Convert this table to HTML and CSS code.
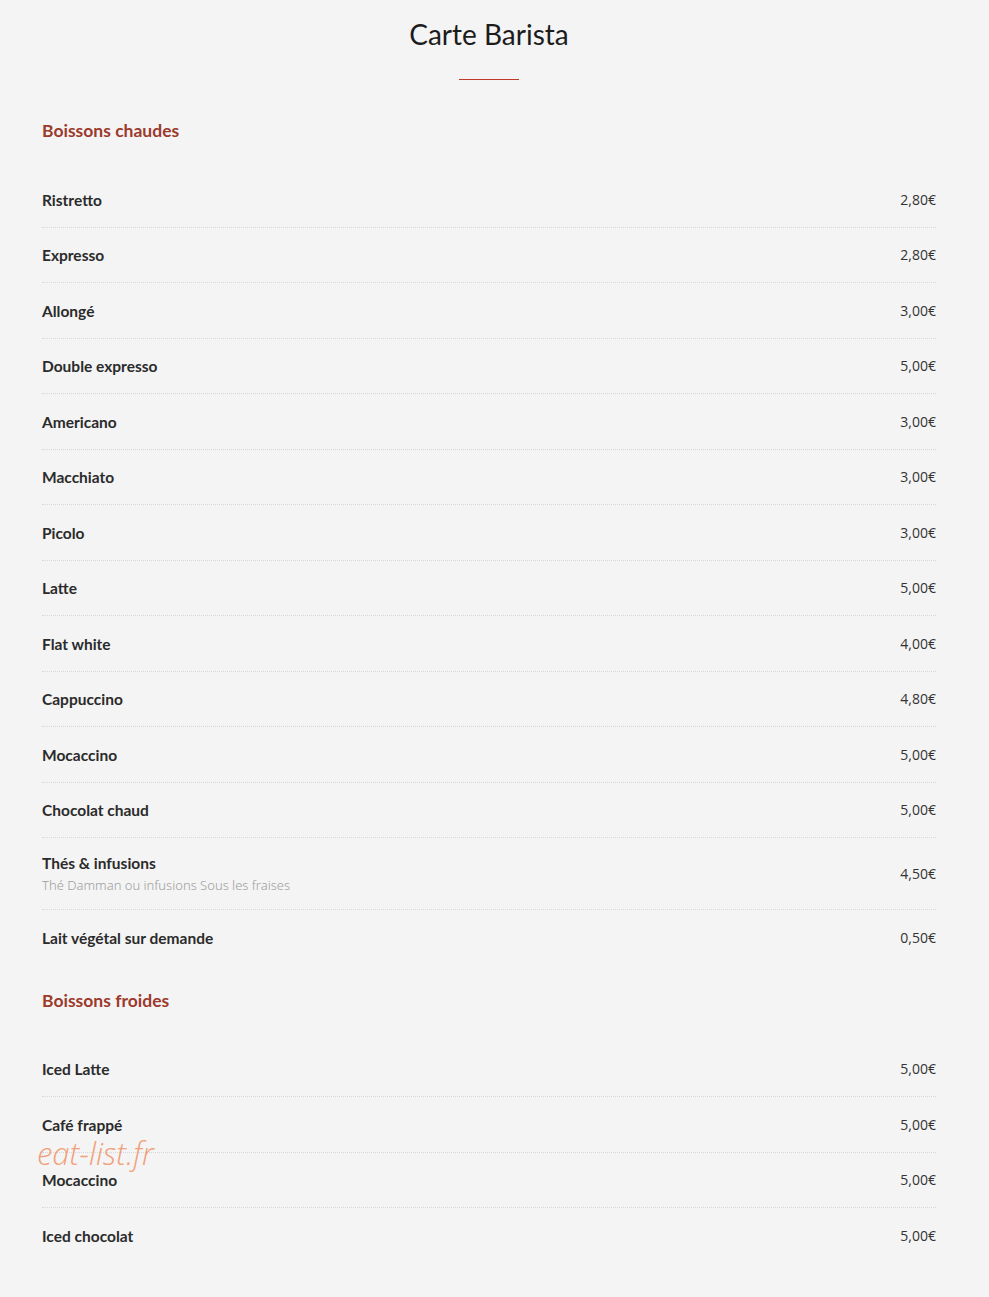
FILE: index.html
```html
<!DOCTYPE html>
<html lang="fr">
<head>
  <meta charset="UTF-8">
  <title>Carte Barista</title>
  <meta name="viewport" content="width=device-width, initial-scale=1.0">
  <link rel="stylesheet" href="styles.css">
</head>
<body>

  <div class="menu">
    <h1 class="menu-title">Carte Barista</h1>
    <div class="title-rule"></div>

    <!-- Boissons chaudes -->
    <section class="menu-section">
      <h2 class="section-title">Boissons chaudes</h2>
      <ul class="items">
        <li class="item"><div class="item-name">Ristretto</div><div class="item-price">2,80€</div></li>
        <li class="item"><div class="item-name">Expresso</div><div class="item-price">2,80€</div></li>
        <li class="item"><div class="item-name">Allongé</div><div class="item-price">3,00€</div></li>
        <li class="item"><div class="item-name">Double expresso</div><div class="item-price">5,00€</div></li>
        <li class="item"><div class="item-name">Americano</div><div class="item-price">3,00€</div></li>
        <li class="item"><div class="item-name">Macchiato</div><div class="item-price">3,00€</div></li>
        <li class="item"><div class="item-name">Picolo</div><div class="item-price">3,00€</div></li>
        <li class="item"><div class="item-name">Latte</div><div class="item-price">5,00€</div></li>
        <li class="item"><div class="item-name">Flat white</div><div class="item-price">4,00€</div></li>
        <li class="item"><div class="item-name">Cappuccino</div><div class="item-price">4,80€</div></li>
        <li class="item"><div class="item-name">Mocaccino</div><div class="item-price">5,00€</div></li>
        <li class="item"><div class="item-name">Chocolat chaud</div><div class="item-price">5,00€</div></li>
        <li class="item with-desc">
          <div>
            <div class="item-name">Thés &amp; infusions</div>
            <div class="item-desc">Thé Damman ou infusions Sous les fraises</div>
          </div>
          <div class="item-price">4,50€</div>
        </li>
        <li class="item"><div class="item-name">Lait végétal sur demande</div><div class="item-price">0,50€</div></li>
      </ul>
    </section>

    <!-- Boissons froides -->
    <section class="menu-section">
      <h2 class="section-title">Boissons froides</h2>
      <ul class="items">
        <li class="item"><div class="item-name">Iced Latte</div><div class="item-price">5,00€</div></li>
        <li class="item"><div class="item-name">Café frappé</div><div class="item-price">5,00€</div></li>
        <li class="item"><div class="item-name">Mocaccino</div><div class="item-price">5,00€</div></li>
        <li class="item"><div class="item-name">Iced chocolat</div><div class="item-price">5,00€</div></li>
      </ul>
    </section>
  </div>

  <div class="watermark">eat-list.fr</div>

</body>
</html>
```

FILE: styles.css
```css
body {
  margin: 0;
  background-color: #f4f4f4;
  font-family: 'Lato', sans-serif;
  color: #2b2b2b;
}

.menu {
  margin: 0 53px 0 42px;
  padding-top: 16px;
}

.menu-title {
  margin: 0;
  text-align: center;
  font-family: 'Lato', sans-serif;
  font-weight: 400;
  font-size: 28px;
  line-height: 36px;
  color: #1c1c1c;
}

.title-rule {
  width: 60px;
  height: 1px;
  margin: 27px auto 0;
  background-color: #c0392b;
}

.menu-section {
  margin-top: 24px;
}

.menu-section:first-of-type {
  margin-top: 39px;
}

.section-title {
  margin: 0 0 29px;
  font-size: 17.5px;
  line-height: 24px;
  font-weight: 700;
  color: #9c3a2c;
}

.items {
  list-style: none;
  margin: 0;
  padding: 0;
}

.item {
  display: flex;
  justify-content: space-between;
  align-items: center;
  padding: 17.5px 0 17px;
  border-bottom: 1px dotted #d6d6d6;
}

.item:last-child {
  border-bottom: none;
}

.item.with-desc {
  padding: 15px 0;
}

.item-name {
  font-size: 15.5px;
  line-height: 20px;
  font-weight: 700;
  color: #2b2b2b;
}

.item-desc {
  margin-top: 3px;
  font-family: 'Noto Sans', sans-serif;
  font-size: 13px;
  line-height: 18px;
  font-weight: 300;
  color: #9e9e9e;
}

.item-price {
  font-family: 'Open Sans', sans-serif;
  font-size: 14px;
  line-height: 20px;
  color: #333;
}

.watermark {
  position: absolute;
  left: 37px;
  top: 1133px;
  font-family: 'Open Sans', sans-serif;
  font-style: italic;
  font-weight: 300;
  font-size: 31px;
  line-height: 40px;
  color: #f0a07c;
}
```
